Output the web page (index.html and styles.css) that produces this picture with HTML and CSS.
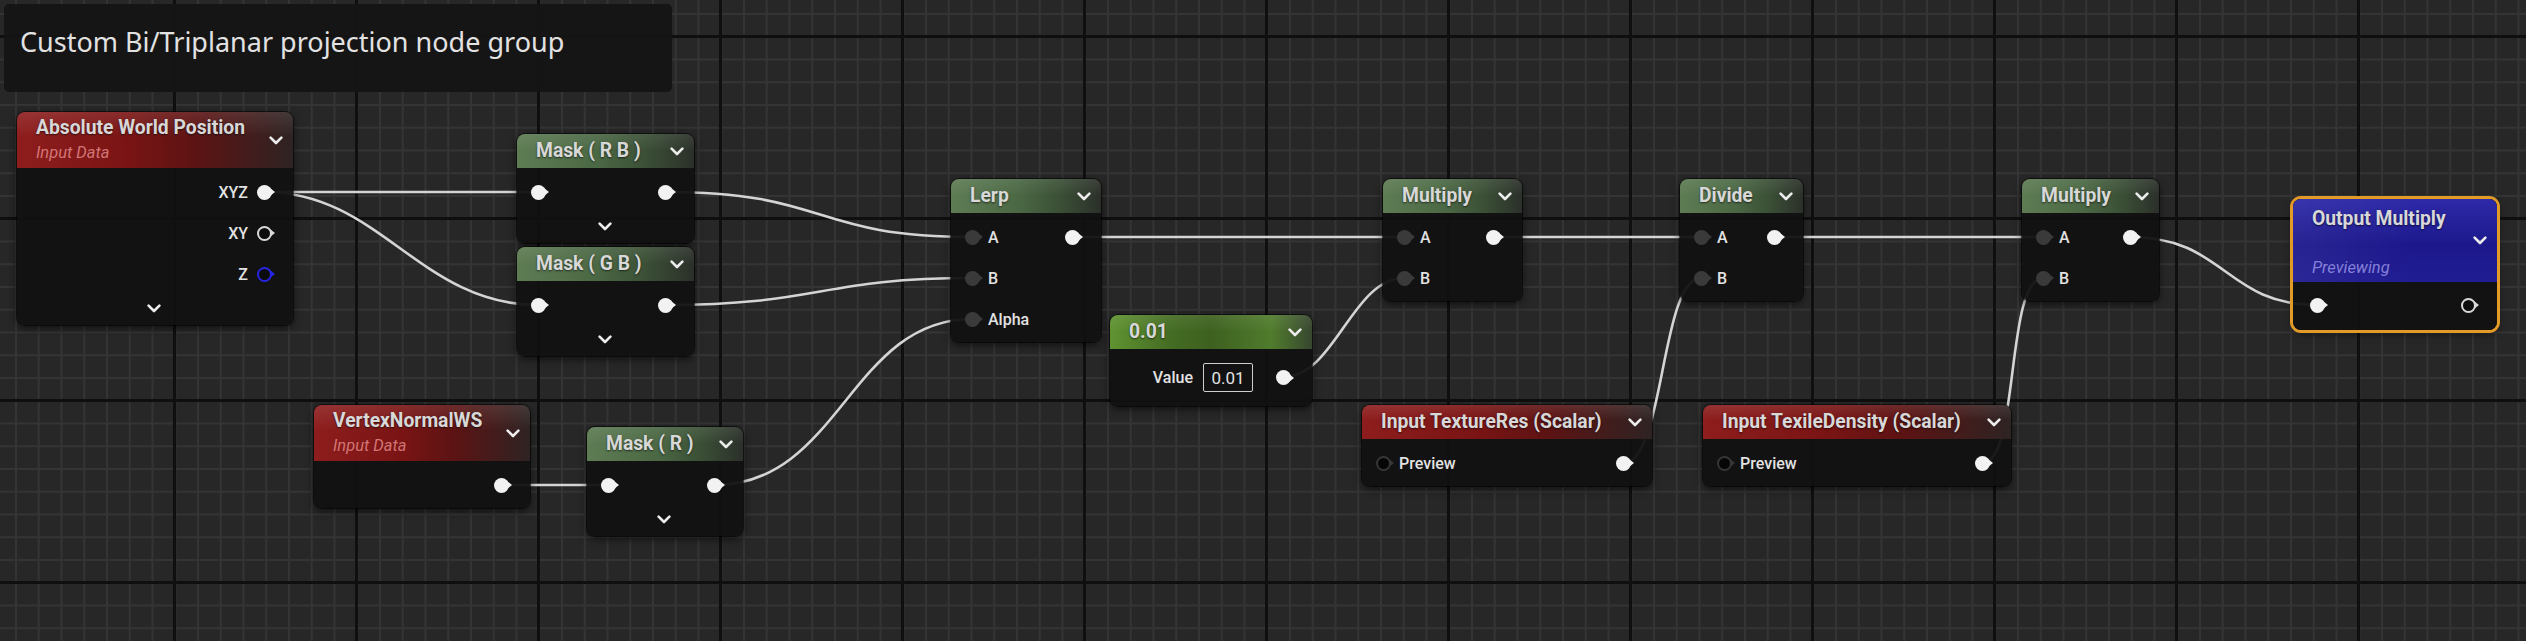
FILE: index.html
```html
<!DOCTYPE html>
<html lang="en">
<head>
  <meta charset="UTF-8">
  <title>Material graph</title>
  <link rel="stylesheet" href="styles.css">
</head>
<body>
  <svg class="defs" width="0" height="0">
    <symbol id="chev" viewBox="0 0 14 9">
      <polyline points="1.6,1.6 7,7 12.4,1.6" fill="none" stroke="currentColor" stroke-width="2.6" stroke-linecap="round" stroke-linejoin="round"/>
    </symbol>
  </svg>

  <div class="graph">
    <div class="comment">Custom Bi/Triplanar projection node group</div>

    <!-- wires sit under the nodes -->
    <svg class="wires" width="2526" height="641" viewBox="0 0 2526 641">
      <path d="M264.5 192 L538.5 192"/>
      <path d="M264.5 192 C380 192 420 305 538.5 305"/>
      <path d="M665.5 192 C830 192 810 237 972.5 237"/>
      <path d="M665.5 305 C820 305 820 278 972.5 278"/>
      <path d="M501.5 485 L608.5 485"/>
      <path d="M714.5 485 C840 485 850 319 972.5 319"/>
      <path d="M1072.5 237 L1404.5 237"/>
      <path d="M1283.5 377 C1335 377 1352 278 1404.5 278"/>
      <path d="M1493.5 237 L1701.5 237"/>
      <path d="M1623.5 463 C1665 463 1660 278 1701.5 278"/>
      <path d="M1774.5 237 L2043.5 237"/>
      <path d="M1982.5 463 C2020 463 2005 278 2043.5 278"/>
      <path d="M2130.5 237 C2225 237 2225 305 2317.5 305"/>
    </svg>

    <!-- Absolute World Position -->
    <div class="node n-awp">
      <div class="head red tall">
        <div class="titles"><span class="title">Absolute World Position</span><span class="sub">Input Data</span></div>
        <svg class="chev"><use href="#chev"/></svg>
      </div>
      <div class="body">
        <div class="pins">
          <div class="col outs">
            <div class="row"><span>XYZ</span><i class="pin"></i></div>
            <div class="row"><span>XY</span><i class="pin ring"></i></div>
            <div class="row"><span>Z</span><i class="pin ring blue"></i></div>
          </div>
        </div>
        <div class="more"><svg class="chev"><use href="#chev"/></svg></div>
      </div>
    </div>

    <!-- masks -->
    <div class="node n-maskrb">
      <div class="head green"><span class="title">Mask ( R B )</span><svg class="chev"><use href="#chev"/></svg></div>
      <div class="body">
        <div class="pins">
          <div class="col"><div class="row"><i class="pin"></i></div></div>
          <div class="col outs"><div class="row"><i class="pin"></i></div></div>
        </div>
        <div class="more"><svg class="chev"><use href="#chev"/></svg></div>
      </div>
    </div>

    <div class="node n-maskgb">
      <div class="head green"><span class="title">Mask ( G B )</span><svg class="chev"><use href="#chev"/></svg></div>
      <div class="body">
        <div class="pins">
          <div class="col"><div class="row"><i class="pin"></i></div></div>
          <div class="col outs"><div class="row"><i class="pin"></i></div></div>
        </div>
        <div class="more"><svg class="chev"><use href="#chev"/></svg></div>
      </div>
    </div>

    <!-- VertexNormalWS -->
    <div class="node n-vnws">
      <div class="head red tall">
        <div class="titles"><span class="title">VertexNormalWS</span><span class="sub">Input Data</span></div>
        <svg class="chev"><use href="#chev"/></svg>
      </div>
      <div class="body">
        <div class="pins">
          <div class="col outs"><div class="row"><i class="pin"></i></div></div>
        </div>
      </div>
    </div>

    <div class="node n-maskr">
      <div class="head green"><span class="title">Mask ( R )</span><svg class="chev"><use href="#chev"/></svg></div>
      <div class="body">
        <div class="pins">
          <div class="col"><div class="row"><i class="pin"></i></div></div>
          <div class="col outs"><div class="row"><i class="pin"></i></div></div>
        </div>
        <div class="more"><svg class="chev"><use href="#chev"/></svg></div>
      </div>
    </div>

    <!-- Lerp -->
    <div class="node n-lerp">
      <div class="head green"><span class="title">Lerp</span><svg class="chev"><use href="#chev"/></svg></div>
      <div class="body">
        <div class="pins">
          <div class="col">
            <div class="row"><i class="pin dim"></i><span>A</span></div>
            <div class="row"><i class="pin dim"></i><span>B</span></div>
            <div class="row"><i class="pin dim"></i><span>Alpha</span></div>
          </div>
          <div class="col outs"><div class="row"><i class="pin"></i></div></div>
        </div>
      </div>
    </div>

    <!-- constant -->
    <div class="node n-const">
      <div class="head lime"><span class="title">0.01</span><svg class="chev"><use href="#chev"/></svg></div>
      <div class="body value">
        <span class="lbl">Value</span>
        <span class="val">0.01</span>
        <i class="pin"></i>
      </div>
    </div>

    <!-- Multiply -->
    <div class="node n-mul1">
      <div class="head green"><span class="title">Multiply</span><svg class="chev"><use href="#chev"/></svg></div>
      <div class="body">
        <div class="pins">
          <div class="col">
            <div class="row"><i class="pin dim"></i><span>A</span></div>
            <div class="row"><i class="pin dim"></i><span>B</span></div>
          </div>
          <div class="col outs"><div class="row"><i class="pin"></i></div></div>
        </div>
      </div>
    </div>

    <!-- Divide -->
    <div class="node n-div">
      <div class="head green"><span class="title">Divide</span><svg class="chev"><use href="#chev"/></svg></div>
      <div class="body">
        <div class="pins">
          <div class="col">
            <div class="row"><i class="pin dim"></i><span>A</span></div>
            <div class="row"><i class="pin dim"></i><span>B</span></div>
          </div>
          <div class="col outs"><div class="row"><i class="pin"></i></div></div>
        </div>
      </div>
    </div>

    <!-- Multiply 2 -->
    <div class="node n-mul2">
      <div class="head green"><span class="title">Multiply</span><svg class="chev"><use href="#chev"/></svg></div>
      <div class="body">
        <div class="pins">
          <div class="col">
            <div class="row"><i class="pin dim"></i><span>A</span></div>
            <div class="row"><i class="pin dim"></i><span>B</span></div>
          </div>
          <div class="col outs"><div class="row"><i class="pin"></i></div></div>
        </div>
      </div>
    </div>

    <!-- scalar inputs -->
    <div class="node n-texres">
      <div class="head red"><span class="title">Input TextureRes (Scalar)</span><svg class="chev"><use href="#chev"/></svg></div>
      <div class="body">
        <div class="pins">
          <div class="col"><div class="row"><i class="pin ring off"></i><span>Preview</span></div></div>
          <div class="col outs"><div class="row"><i class="pin"></i></div></div>
        </div>
      </div>
    </div>

    <div class="node n-texdens">
      <div class="head red"><span class="title">Input TexileDensity (Scalar)</span><svg class="chev"><use href="#chev"/></svg></div>
      <div class="body">
        <div class="pins">
          <div class="col"><div class="row"><i class="pin ring off"></i><span>Preview</span></div></div>
          <div class="col outs"><div class="row"><i class="pin"></i></div></div>
        </div>
      </div>
    </div>

    <!-- output, selected -->
    <div class="node n-out sel">
      <div class="head blue out-head">
        <div class="titles"><span class="title">Output Multiply</span><span class="sub">Previewing</span></div>
        <svg class="chev"><use href="#chev"/></svg>
      </div>
      <div class="body out-body">
        <div class="pins">
          <div class="col"><div class="row"><i class="pin"></i></div></div>
          <div class="col outs"><div class="row"><i class="pin ring"></i></div></div>
        </div>
      </div>
    </div>
  </div>
</body>
</html>
```

FILE: styles.css
```css
*{
  margin: 0;
  padding: 0;
}
body{
  background: #262626;
  font-family: Roboto, "Liberation Sans", sans-serif;
}
.defs{
  position: absolute;
}
.graph{
  position: relative;
  width: 2526px;
  height: 641px;
  overflow: hidden;
  background-color: #272727;
  background-image:
    linear-gradient(90deg, #0f0f0f 3px, transparent 3px),
    linear-gradient(#0f0f0f 3px, transparent 3px),
    linear-gradient(90deg, #343434 2px, transparent 2px),
    linear-gradient(#343434 2px, transparent 2px);
  background-size: 182px 182px, 182px 182px, 22.75px 22.75px, 22.75px 22.75px;
  background-position: 173px 0, 0 35px, 15px 0, 0 13px;
}
.comment{
  position: absolute;
  left: 4px;
  top: 4px;
  width: 668px;
  height: 88px;
  box-sizing: border-box;
  padding: 19px 16px;
  border-radius: 5px;
  background: rgba(21, 21, 21, 0.97);
  color: #e2e2e2;
  font-family: "Noto Sans", "Open Sans", sans-serif;
  font-size: 27px;
  line-height: 38px;
}
.wires{
  position: absolute;
  left: 0;
  top: 0;
}
.wires path{
  fill: none;
  stroke: #d4d4d4;
  stroke-width: 2.6;
}

/* nodes */
.node{
  position: absolute;
  border-radius: 8px;
  background: rgba(17, 17, 17, 0.95);
  box-shadow: 0 0 0 1px rgba(0, 0, 0, 0.55), 0 3px 8px rgba(0, 0, 0, 0.6);
  color: #dedede;
}
.head{
  height: 34px;
  display: flex;
  align-items: center;
  justify-content: space-between;
  padding: 0 10px 0 19px;
  border-radius: 8px 8px 0 0;
}
.head.tall{
  height: 56px;
}
.head .titles{
  align-self: flex-start;
  display: flex;
  flex-direction: column;
  gap: 5px;
  padding-top: 6px;
}
.title{
  font-size: 19.3px;
  font-weight: 700;
  line-height: 20px;
  color: #d8d8d8;
  text-shadow: 0 1px 2px rgba(0, 0, 0, 0.6);
  white-space: nowrap;
}
.sub{
  font-size: 16.5px;
  font-style: italic;
  line-height: 20px;
  color: rgba(235, 150, 150, 0.75);
}
.chev{
  width: 14px;
  height: 9px;
  flex: none;
  color: #ececec;
}
.red{
  background:
    linear-gradient(180deg, rgba(255, 255, 255, 0.1), rgba(255, 255, 255, 0) 45%),
    linear-gradient(90deg, #8e1d1d 0%, #7a1414 40%, #5c1313 65%, #2e2323 100%);
}
.green{
  background:
    linear-gradient(180deg, rgba(255, 255, 255, 0.08), rgba(255, 255, 255, 0) 50%),
    linear-gradient(90deg, #5e7c54 0%, #4b6844 45%, #3b5036 72%, #2b302a 100%);
}
.lime{
  background:
    linear-gradient(180deg, rgba(255, 255, 255, 0.08), rgba(255, 255, 255, 0) 50%),
    linear-gradient(90deg, #609331 0%, #446c23 30%, #3d601f 50%, #507c2d 80%, #37462f 100%);
}
.blue{
  background:
    linear-gradient(90deg, rgba(255, 255, 255, 0.05), rgba(255, 255, 255, 0) 60%),
    linear-gradient(180deg, #2e2aa8 0%, #1c188c 55%, #201c92 100%);
}

.body{
  padding: 10px 16px 9px 14px;
}
.pins{
  display: flex;
  justify-content: space-between;
}
.col{
  display: flex;
  flex-direction: column;
  gap: 13px;
}
.col.outs{
  margin-left: auto;
  align-items: flex-end;
}
.row{
  height: 28px;
  display: flex;
  align-items: center;
  gap: 3px;
  font-size: 16px;
  font-weight: 500;
  color: #e2e2e2;
}
.outs .row{
  gap: 9px;
}
.more{
  height: 16px;
  margin-top: 12px;
  display: flex;
  justify-content: center;
  align-items: center;
}

/* pins */
.pin{
  position: relative;
  flex: none;
  width: 15px;
  height: 15px;
  margin-right: 5px;
  border-radius: 50%;
  background: #f2f2f2;
  box-sizing: border-box;
}
.pin:after{
  content: "";
  position: absolute;
  left: 13px;
  top: 3.5px;
  border-left: 5px solid #f2f2f2;
  border-top: 4px solid transparent;
  border-bottom: 4px solid transparent;
}
.pin.dim{
  background: #3a3a3a;
}
.pin.dim:after{
  border-left-color: #3a3a3a;
}
.pin.ring{
  background: #0c0c0c;
  border: 2.5px solid #d8d8d8;
}
.pin.ring:after{
  left: 10.5px;
  top: 1px;
  border-left-color: #d8d8d8;
}
.pin.blue{
  border-color: #2626e2;
}
.pin.blue:after{
  border-left-color: #2626e2;
}
.pin.off{
  background: #060606;
  border-color: #363636;
}
.pin.off:after{
  border-left-color: #363636;
}

/* constant value row */
.body.value{
  display: flex;
  align-items: center;
  justify-content: flex-end;
  gap: 10px;
  padding: 14px 16px 14px 14px;
}
.lbl{
  font-size: 16px;
  font-weight: 500;
  color: #e2e2e2;
}
.val{
  width: 50px;
  height: 29px;
  box-sizing: border-box;
  border: 1.5px solid #cfcfcf;
  border-radius: 2px;
  display: flex;
  align-items: center;
  justify-content: center;
  font-size: 17px;
  color: #e2e2e2;
}
.body.value .pin{
  margin-left: 13px;
}

/* output node */
.sel{
  box-shadow: 0 0 0 3px #e39a27, 0 3px 10px rgba(0, 0, 0, 0.6);
}
.out-head{
  height: 83px;
}
.out-head .titles{
  gap: 29px;
  padding-top: 10px;
}
.out-head .sub{
  color: rgba(160, 155, 235, 0.8);
}
.out-body{
  padding: 9px 16px 11px 17px;
}

/* placement on the canvas */
.n-awp{ left: 17px; top: 112px; width: 276px; }
.n-maskrb{ left: 517px; top: 134px; width: 177px; }
.n-maskgb{ left: 517px; top: 247px; width: 177px; }
.n-vnws{ left: 314px; top: 405px; width: 216px; }
.n-maskr{ left: 587px; top: 427px; width: 156px; }
.n-lerp{ left: 951px; top: 179px; width: 150px; }
.n-const{ left: 1110px; top: 315px; width: 202px; }
.n-mul1{ left: 1383px; top: 179px; width: 139px; }
.n-div{ left: 1680px; top: 179px; width: 123px; }
.n-mul2{ left: 2022px; top: 179px; width: 137px; }
.n-texres{ left: 1362px; top: 405px; width: 290px; }
.n-texdens{ left: 1703px; top: 405px; width: 308px; }
.n-out{ left: 2293px; top: 199px; width: 204px; }
```
